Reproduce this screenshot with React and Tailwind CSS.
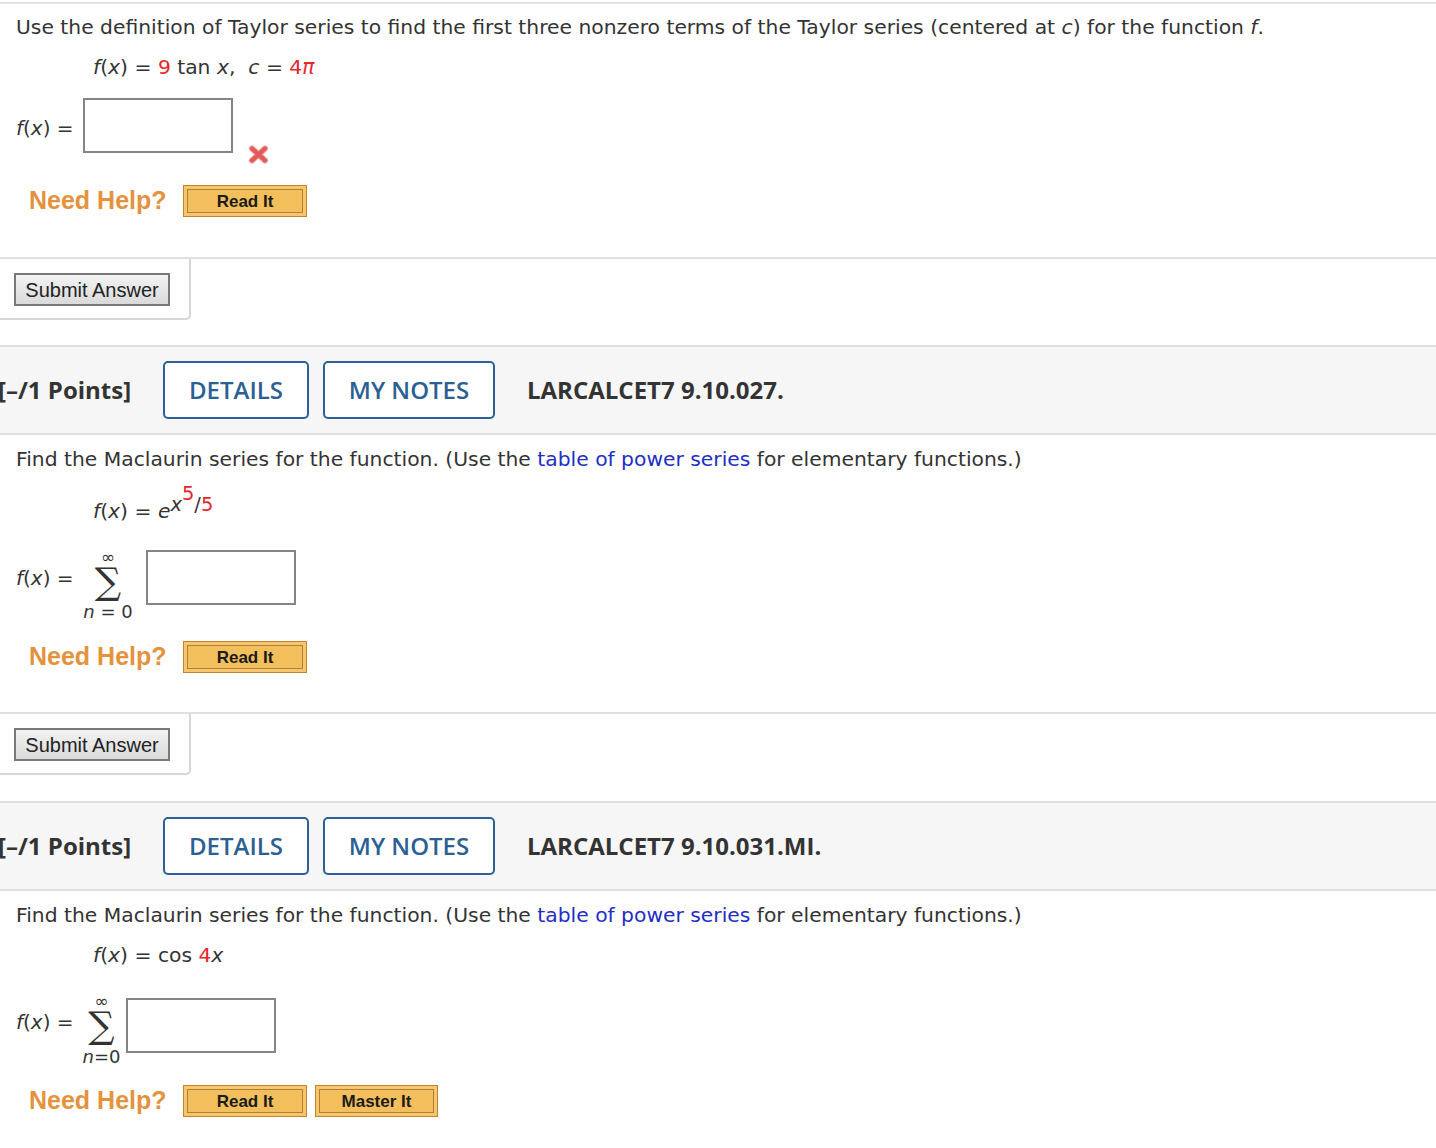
import React from 'react';

function I({ children }) {
  return <i className="italic">{children}</i>;
}

function Red({ children }) {
  return <span className="text-[#e8262b]">{children}</span>;
}

function RedX() {
  return (
    <svg width="21" height="19" viewBox="0 0 21 19" className="block">
      <path d="M4 3.5 L17 15.5 M17 3.5 L4 15.5" stroke="#f09a9a" strokeWidth="6" strokeLinecap="round" />
      <path d="M4 3.5 L17 15.5 M17 3.5 L4 15.5" stroke="#e25a5a" strokeWidth="4" strokeLinecap="round" />
    </svg>
  );
}

function HelpButton({ label, width }) {
  return (
    <div className={`${width} h-[32px] border border-[#c4822f] bg-[#f6c76a] p-[3px]`}>
      <div className="flex h-full items-center justify-center border border-[#b17f3b] bg-[#f2bf5c] pt-[1px] font-['Liberation_Sans'] text-[17px] font-bold text-[#1b1b1b]">
        {label}
      </div>
    </div>
  );
}

function NeedHelp({ master }) {
  return (
    <div className="flex h-[32px] items-center">
      <span className="ml-[29px] w-[154px] font-['Liberation_Sans'] text-[25px] font-bold text-[#e5923e]">Need Help?</span>
      <HelpButton label="Read It" width="w-[124px]" />
      {master ? (
        <div className="ml-[8px]">
          <HelpButton label="Master It" width="w-[123px]" />
        </div>
      ) : null}
    </div>
  );
}

function AnswerBox({ className = '' }) {
  return <div className={`h-[55px] w-[150px] shrink-0 border-2 border-[#858585] bg-white ${className}`} />;
}

function SubmitPanel() {
  return (
    <div className="border-t-2 border-[#e0e0e0]">
      <div className="h-[61px] w-[191px] rounded-br-[5px] border-b-2 border-r-2 border-[#d6d6d6] pl-[14px] pt-[14px]">
        <div className="flex h-[33px] w-[156px] items-center justify-center border-2 border-[#787878] bg-gradient-to-b from-[#f3f3f3] to-[#dadada] font-['Liberation_Sans'] text-[20px] text-[#222]">
          Submit Answer
        </div>
      </div>
    </div>
  );
}

function Header({ code }) {
  return (
    <div className="flex h-[90px] items-center border-y-2 border-[#e0e0e0] bg-[#f6f6f6] font-['Open_Sans'] text-[#333]">
      <div className="w-[163px]">
        <span className="ml-[-2px] text-[24px] font-bold">[–/1 Points]</span>
      </div>
      <div className="flex h-[58px] w-[146px] items-center justify-center rounded-[5px] border-2 border-[#2b6094] bg-white text-[24px] font-semibold text-[#2b6094]">
        DETAILS
      </div>
      <div className="ml-[14px] flex h-[58px] w-[172px] items-center justify-center rounded-[5px] border-2 border-[#2b6094] bg-white text-[24px] font-semibold text-[#2b6094]">
        MY NOTES
      </div>
      <span className="ml-[32px] text-[24px] font-bold">{code}</span>
    </div>
  );
}

function Sigma({ lower, width, top, gap }) {
  return (
    <div className={`flex ${width} ${top} shrink-0 flex-col items-center text-[#333]`}>
      <span className="text-[17px] leading-[12px]">∞</span>
      <span className="mt-[1px] font-['DejaVu_Serif'] text-[37px] leading-[36px]">∑</span>
      <span className={`${gap} text-[18px] leading-[16px]`}>{lower}</span>
    </div>
  );
}

function PowerSeriesText() {
  return (
    <div className="h-[24px] pl-[16px] leading-[24px]">
      Find the Maclaurin series for the function. (Use the{' '}
      <span className="text-[#1d2fc4]">table of power series</span> for elementary functions.)
    </div>
  );
}

function FxLabel({ pad }) {
  return (
    <span className={`ml-[16px] w-[67px] shrink-0 text-[20px] leading-[24px] ${pad}`}>
      <I>f</I>(<I>x</I>) =
    </span>
  );
}

export default function App() {
  return (
    <div className="min-h-[1148px] w-[1436px] bg-white font-['DejaVu_Sans'] text-[20.3px] text-[#333]">
      <div className="h-[2px]" />
      <div className="border-t-2 border-[#e2e2e2]">
        <div className="mt-[11px] h-[24px] pl-[16px] leading-[24px]">
          Use the definition of Taylor series to find the first three nonzero terms of the Taylor series (centered at <I>c</I>) for the function <I>f</I>.
        </div>
        <div className="mt-[16px] h-[24px] pl-[93px] leading-[24px]">
          <I>f</I>(<I>x</I>) = <Red>9</Red> tan <I>x</I>,&nbsp; <I>c</I> = <Red>4<I>π</I></Red>
        </div>
        <div className="mt-[19px] flex h-[55px] items-start">
          <FxLabel pad="pt-[18px]" />
          <AnswerBox />
          <div className="ml-[15px] mt-[47px]">
            <RedX />
          </div>
        </div>
        <div className="mt-[32px]">
          <NeedHelp />
        </div>
        <div className="mt-[40px]">
          <SubmitPanel />
        </div>
      </div>

      <div className="mt-[25px]">
        <Header code="LARCALCET7 9.10.027." />
      </div>
      <div className="mt-[12px]">
        <PowerSeriesText />
      </div>
      <div className="mt-[28px] h-[24px] pl-[93px] leading-[24px]">
        <I>f</I>(<I>x</I>) = <I>e</I>
        <span className="relative top-[-7px] text-[19.5px]">
          <I>x</I>
          <span className="relative top-[-11px]">
            <Red>5</Red>
          </span>
          /<Red>5</Red>
        </span>
      </div>
      <div className="mt-[27px] flex h-[55px] items-start">
        <FxLabel pad="pt-[16px]" />
        <Sigma lower={<><I>n</I> = 0</>} width="w-[50px]" top="mt-[1px]" gap="mt-[4px]" />
        <AnswerBox className="ml-[13px]" />
      </div>
      <div className="mt-[36px]">
        <NeedHelp />
      </div>
      <div className="mt-[39px]">
        <SubmitPanel />
      </div>

      <div className="mt-[26px]">
        <Header code="LARCALCET7 9.10.031.MI." />
      </div>
      <div className="mt-[12px]">
        <PowerSeriesText />
      </div>
      <div className="mt-[16px] h-[24px] pl-[93px] leading-[24px]">
        <I>f</I>(<I>x</I>) = cos <Red>4</Red><I>x</I>
      </div>
      <div className="mt-[31px] flex h-[55px] items-start">
        <FxLabel pad="pt-[12px]" />
        <Sigma lower={<><I>n</I>=0</>} width="w-[37px]" top="mt-[-3px]" gap="mt-[5px]" />
        <AnswerBox className="ml-[6px]" />
      </div>
      <div className="mt-[32px]">
        <NeedHelp master />
      </div>
    </div>
  );
}
